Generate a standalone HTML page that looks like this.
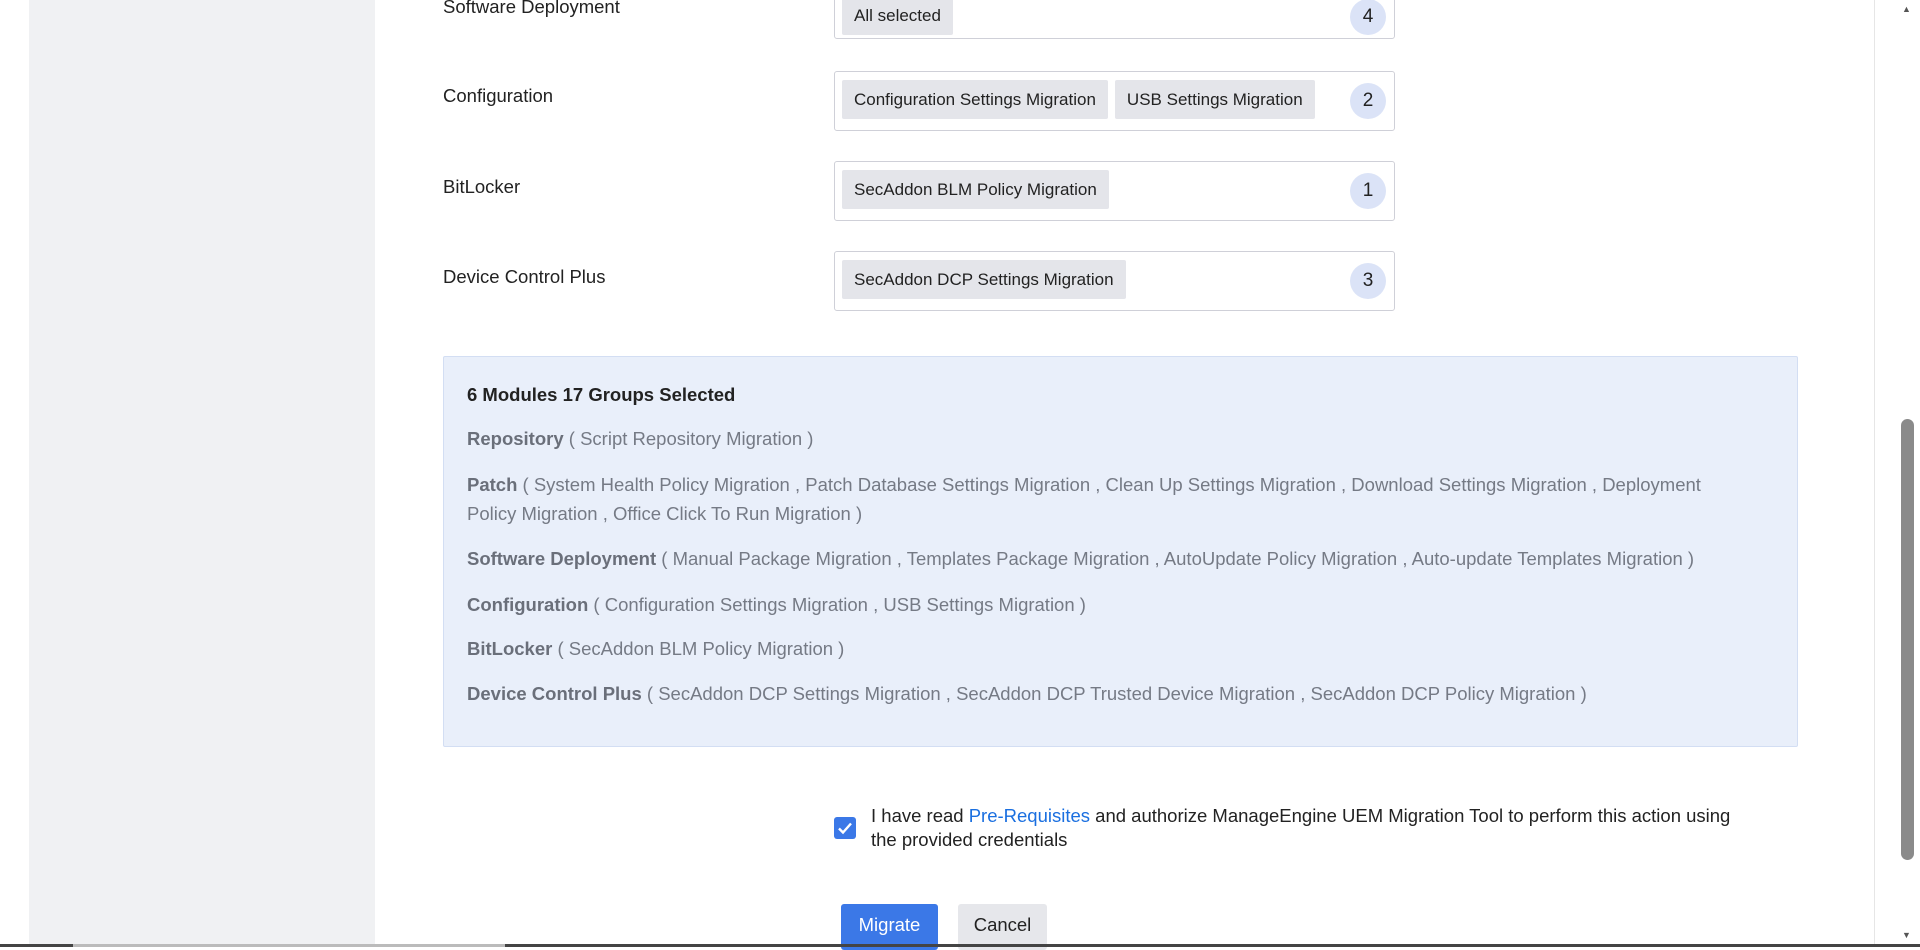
<!DOCTYPE html>
<html><head><meta charset="utf-8"><style>
*{box-sizing:border-box;margin:0;padding:0}
body{width:1920px;height:947px;overflow:hidden;background:#fff;font-family:"Liberation Sans",sans-serif;color:#222;position:relative}
.lp{position:absolute;left:29px;top:0;width:346px;height:947px;background:#f0f1f3}
.rb{position:absolute;left:1874px;top:0;width:1px;height:947px;background:#e6e6e6}
.sb{position:absolute;left:1896px;top:0;width:24px;height:947px;background:#fff}
.th{position:absolute;left:5px;top:419px;width:13px;height:441px;background:#8a8a8a;border-radius:7px}
.lab{position:absolute;left:443px;font-size:18.5px;color:#222}
.box{position:absolute;left:834px;width:561px;height:60px;border:1px solid #cfd0d8;border-radius:3px;background:#fff}
.chips{position:absolute;left:7px;top:8px;display:flex;gap:7px}
.chip{height:39px;line-height:39px;padding:0 12px;background:#e4e5ea;border-radius:2px;font-size:17px;color:#222;white-space:nowrap}
.cnt{position:absolute;left:515px;top:11px;width:36px;height:36px;border-radius:50%;background:#dbe3f7;text-align:center;line-height:36px;font-size:19px;color:#222}
.sum{position:absolute;left:443px;top:356px;width:1355px;height:391px;background:#e9effa;border:1px solid #d3def3;border-radius:2px;color:#757a85;font-size:18.5px}
.sum p{position:absolute;left:23px;right:60px;line-height:29px}
.sum b{color:#6a6f7a}
.ck{position:absolute;left:834px;top:817px;width:22px;height:22px;background:#3b78e7;border-radius:3px}
.btn{position:absolute;top:904px;height:46px;line-height:42px;font-size:18.5px;text-align:center;border-radius:3px}
</style></head><body>
<div class="lp"></div><div class="rb"></div><div class="sb"><div class="th"></div></div>
<div style="position:absolute;left:1902px;top:4px;font-size:9px;color:#555">▲</div>
<div style="position:absolute;left:1902px;top:930px;font-size:9px;color:#555">▼</div>

<div class="lab" style="top:-4px">Software Deployment</div>
<div class="box" style="top:-21px"><div class="chips" style="top:16px"><div class="chip">All selected</div></div><div class="cnt" style="top:19px">4</div></div>

<div class="lab" style="top:85px">Configuration</div>
<div class="box" style="top:71px"><div class="chips"><div class="chip">Configuration Settings Migration</div><div class="chip">USB Settings Migration</div></div><div class="cnt">2</div></div>

<div class="lab" style="top:176px">BitLocker</div>
<div class="box" style="top:161px"><div class="chips"><div class="chip">SecAddon BLM Policy Migration</div></div><div class="cnt">1</div></div>

<div class="lab" style="top:266px">Device Control Plus</div>
<div class="box" style="top:251px"><div class="chips"><div class="chip">SecAddon DCP Settings Migration</div></div><div class="cnt">3</div></div>

<div class="sum">
<p style="top:23px;color:#222;font-weight:bold">6 Modules 17 Groups Selected</p>
<p style="top:67px"><b>Repository</b> ( Script Repository Migration )</p>
<p style="top:113px"><b>Patch</b> ( System Health Policy Migration , Patch Database Settings Migration , Clean Up Settings Migration , Download Settings Migration , Deployment Policy Migration , Office Click To Run Migration )</p>
<p style="top:187px"><b>Software Deployment</b> ( Manual Package Migration , Templates Package Migration , AutoUpdate Policy Migration , Auto-update Templates Migration )</p>
<p style="top:233px"><b>Configuration</b> ( Configuration Settings Migration , USB Settings Migration )</p>
<p style="top:277px"><b>BitLocker</b> ( SecAddon BLM Policy Migration )</p>
<p style="top:322px"><b>Device Control Plus</b> ( SecAddon DCP Settings Migration , SecAddon DCP Trusted Device Migration , SecAddon DCP Policy Migration )</p>
</div>

<div class="ck"><svg width="22" height="22" viewBox="0 0 22 22"><path d="M5 11.5l4 4 8-9" stroke="#fff" stroke-width="2.4" fill="none"/></svg></div>
<div style="position:absolute;left:871px;top:804px;width:875px;font-size:18.5px;line-height:24px;color:#222">I have read <span style="color:#1a6fe0">Pre-Requisites</span> and authorize ManageEngine UEM Migration Tool to perform this action using the provided credentials</div>

<div class="btn" style="left:841px;width:97px;background:#3b78e7;color:#fff">Migrate</div>
<div class="btn" style="left:958px;width:89px;background:#e6e7eb;color:#222">Cancel</div>
<div style="position:absolute;left:0;top:944px;width:73px;height:3px;background:#444"></div>
<div style="position:absolute;left:73px;top:944px;width:432px;height:3px;background:#bbb"></div>
<div style="position:absolute;left:505px;top:944px;width:1415px;height:3px;background:#444"></div>
</body></html>
